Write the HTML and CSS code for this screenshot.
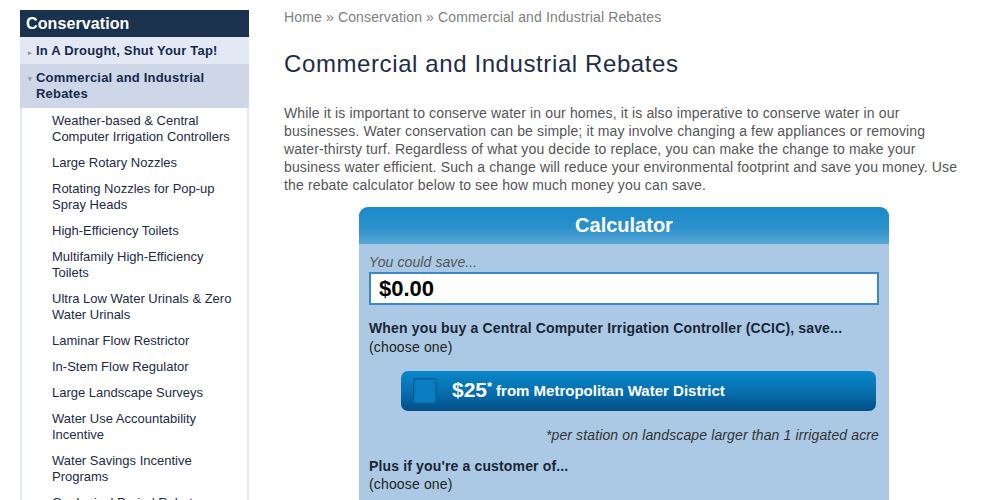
FILE: index.html
```html
<!DOCTYPE html>
<html>
<head>
<meta charset="utf-8">
<link rel="stylesheet" href="styles.css">
</head>
<body>
<div class="page">
  <aside class="sidebar">
    <div class="side-head">Conservation</div>
    <ul class="side-list">
      <li class="top closed"><span class="arrow">&#9656;</span>In A Drought, Shut Your Tap!</li>
      <li class="top open"><span class="arrow">&#9662;</span>Commercial and Industrial Rebates</li>
    </ul>
    <ul class="sub-list">
      <li>Weather-based &amp; Central Computer Irrigation Controllers</li>
      <li>Large Rotary Nozzles</li>
      <li>Rotating Nozzles for Pop-up Spray Heads</li>
      <li>High-Efficiency Toilets</li>
      <li>Multifamily High-Efficiency Toilets</li>
      <li>Ultra Low Water Urinals &amp; Zero Water Urinals</li>
      <li>Laminar Flow Restrictor</li>
      <li>In-Stem Flow Regulator</li>
      <li>Large Landscape Surveys</li>
      <li>Water Use Accountability Incentive</li>
      <li>Water Savings Incentive Programs</li>
      <li>Geological Period Rebates</li>
    </ul>
  </aside>
  <main class="main">
    <div class="crumbs">Home &raquo; Conservation &raquo; Commercial and Industrial Rebates</div>
    <h1 class="title">Commercial and Industrial Rebates</h1>
    <p class="intro">While it is important to conserve water in our homes, it is also imperative to conserve water in our businesses. Water conservation can be simple; it may involve changing a few appliances or removing water-thirsty turf. Regardless of what you decide to replace, you can make the change to make your business water efficient. Such a change will reduce your environmental footprint and save you money. Use the rebate calculator below to see how much money you can save.</p>
    <div class="calc">
      <div class="calc-head">Calculator</div>
      <div class="calc-body">
        <div class="save-label">You could save...</div>
        <div class="save-box">$0.00</div>
        <div class="q"><b>When you buy a Central Computer Irrigation Controller (CCIC), save...</b><br>(choose one)</div>
        <div class="opt">
          <span class="check"></span>
          <span class="amt">$25<sup>*</sup></span>
          <span class="src">from Metropolitan Water District</span>
        </div>
        <div class="note">*per station on landscape larger than 1 irrigated acre</div>
        <div class="q q2"><b>Plus if you're a customer of...</b><br>(choose one)</div>
      </div>
    </div>
  </main>
</div>
</body>
</html>
```

FILE: styles.css
```css
html, body {
  margin: 0;
  padding: 0;
  background: #fff;
  font-family: "Liberation Sans", Arial, sans-serif;
}
.page {
  display: flex;
  align-items: flex-start;
  padding-left: 20px;
}
.sidebar {
  width: 229px;
  margin-top: 10px;
  flex-shrink: 0;
}
.side-head {
  background: #1a324d;
  color: #fff;
  font-weight: bold;
  font-size: 16px;
  line-height: 26px;
  padding: 1px 0 0 6px;
  letter-spacing: 0.1px;
}
.side-list, .sub-list {
  list-style: none;
  margin: 0;
  padding: 0;
}
.top {
  font-size: 13px;
  font-weight: bold;
  line-height: 16px;
  color: #172a4b;
  padding: 6px 8px 5px 16px;
  position: relative;
  letter-spacing: 0.2px;
}
.top.closed { background: #e3e9f4; }
.top.open { background: #cdd7e7; padding-bottom: 6px; }
.arrow {
  position: absolute;
  left: 8px;
  font-size: 7px;
  color: #8a96a8;
  top: 7px;
}
.top.closed .arrow { top: 8px; }
.sub-list {
  border-left: 2px solid #e3e9f4;
  border-right: 2px solid #e3e9f4;
  background: #fff;
}
.sub-list li {
  font-size: 13px;
  line-height: 16px;
  color: #1c2b45;
  padding: 5px 10px 5px 30px;
}
.main {
  width: 680px;
  margin-left: 35px;
  padding-top: 8px;
}
.crumbs {
  font-size: 14px;
  line-height: 18px;
  color: #808080;
  letter-spacing: 0.14px;
}
.title {
  font-size: 24px;
  font-weight: normal;
  line-height: 28px;
  color: #1f2c47;
  margin: 24px 0 0;
  letter-spacing: 0.6px;
}
.intro {
  font-size: 14px;
  line-height: 18px;
  color: #555;
  margin: 26px 0 0;
  letter-spacing: 0.14px;
}
.calc {
  width: 530px;
  margin: 13px auto 0;
  background: #abc9e4;
  border-radius: 9px 9px 0 0;
}
.calc-head {
  height: 37px;
  line-height: 37px;
  text-align: center;
  color: #fff;
  font-weight: bold;
  font-size: 20px;
  border-radius: 9px 9px 0 0;
  background: linear-gradient(#1a8ac8, #2a90cb 55%, #5aa7d6);
}
.calc-body {
  padding: 9px 10px 10px;
}
.save-label {
  font-size: 14px;
  line-height: 18px;
  font-style: italic;
  color: #555;
  letter-spacing: 0.1px;
}
.save-box {
  margin-top: 1px;
  height: 29px;
  border: 2px solid #3c88c7;
  background: #fff;
  font-size: 22px;
  font-weight: bold;
  line-height: 29px;
  color: #000;
  padding-left: 8px;
}
.q {
  margin-top: 14px;
  font-size: 14px;
  line-height: 19px;
  color: #222;
  letter-spacing: 0.15px;
}
.q b { color: #1a2535; }
.q2 { line-height: 18px; margin-top: 13px; }
.opt {
  margin: 14px 3px 0 32px;
  height: 40px;
  border-radius: 7px;
  background: linear-gradient(#0a87c9, #0670b0 50%, #044f86);
  display: flex;
  align-items: center;
  padding-left: 12px;
  color: #fff;
  font-weight: bold;
}
.check {
  width: 22px;
  height: 24px;
  border: 1px solid #0a5d95;
  border-radius: 3px;
  background: #0a7dc2;
  box-shadow: inset 0 0 2px rgba(0,0,0,0.3);
}
.amt {
  margin-left: 15px;
  font-size: 21px;
  line-height: 24px;
  margin-top: -2px;
}
.amt sup {
  font-size: 13px;
  vertical-align: 6px;
  line-height: 0;
}
.src {
  margin-left: 4px;
  font-size: 15px;
  margin-top: -2px;
}
.note {
  margin-top: 15px;
  text-align: right;
  font-size: 14px;
  line-height: 18px;
  font-style: italic;
  color: #333;
  letter-spacing: 0.13px;
}
```
